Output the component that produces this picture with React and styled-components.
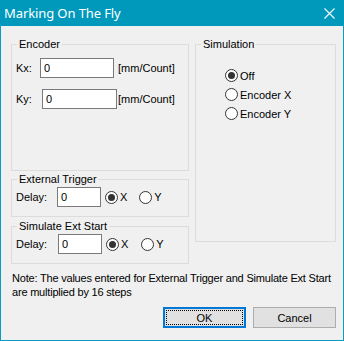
import React from 'react';
import styled, { createGlobalStyle } from 'styled-components';

const Global = createGlobalStyle`
  html, body { margin: 0; padding: 0; background: #f0f0f0; }
  body { font-family: "Liberation Sans", Arial, sans-serif; font-size: 11px; color: #000; }
`;

const Window = styled.div`
  width: 344px;
  height: 341px;
  box-sizing: border-box;
  border: 1px solid #0a9cc0;
  border-top: none;
  background: #f0f0f0;
  display: flex;
  flex-direction: column;
`;

const TitleBar = styled.div`
  height: 26px;
  background: #0099bc;
  color: #fff;
  display: flex;
  align-items: center;
  justify-content: space-between;
  padding: 0 9px 0 4px;
  margin: 0 -1px;
  font-family: "Noto Sans", "Open Sans", sans-serif;
  font-size: 13px;
`;

const Title = styled.span`
  letter-spacing: -0.1px;
`;

const Body = styled.div`
  flex: 1;
  padding: 12px 7px 0 10px;
  display: flex;
  flex-direction: column;
`;

const Columns = styled.div`
  display: grid;
  grid-template-columns: 178px 141px;
  column-gap: 6px;
  align-items: start;
`;

const Stack = styled.div`
  display: flex;
  flex-direction: column;
`;

const Group = styled.fieldset`
  margin: ${p => p.$mt || 0}px 0 0 0;
  padding: ${p => p.$pad};
  height: ${p => p.$h}px;
  box-sizing: border-box;
  border: 1px solid #dcdcdc;
  min-width: 0;
`;

const Caption = styled.legend`
  padding: 0 2px;
  margin: 0 0 0 1px;
  font-size: 11px;
  line-height: 13px;
`;

const FieldRow = styled.div`
  display: flex;
  align-items: center;
  height: 20px;
  margin-top: ${p => p.$mt || 0}px;
`;

const Label = styled.span`
  width: ${p => p.$w}px;
  flex: none;
`;

const Input = styled.div`
  width: ${p => p.$w}px;
  height: 20px;
  box-sizing: border-box;
  border: 1px solid #7a7a7a;
  background: #fff;
  padding: 0 0 0 3px;
  display: flex;
  align-items: center;
  flex: none;
`;

const Unit = styled.span`
  margin-left: ${p => p.$ml}px;
`;

const RadioItem = styled.label`
  display: flex;
  align-items: center;
  gap: 2px;
  margin-left: ${p => p.$ml || 0}px;
  height: ${p => p.$h || 20}px;
`;

const RadioDot = styled.span`
  width: 13px;
  height: 13px;
  box-sizing: border-box;
  border-radius: 50%;
  border: 1px solid #333;
  background: #fff;
  display: flex;
  align-items: center;
  justify-content: center;
  flex: none;
  &::after {
    content: '';
    width: 7px;
    height: 7px;
    border-radius: 50%;
    background: ${p => (p.$on ? '#333' : 'transparent')};
  }
`;

const RadioList = styled.div`
  display: flex;
  flex-direction: column;
  margin-left: 25px;
`;

const Note = styled.p`
  margin: 7px 0 0 1px;
  line-height: 14px;
  white-space: nowrap;
  letter-spacing: -0.2px;
`;

const Buttons = styled.div`
  display: flex;
  justify-content: flex-end;
  gap: 7px;
  margin-top: 8px;
`;

const Button = styled.div`
  width: 83px;
  height: 21px;
  box-sizing: border-box;
  background: #e1e1e1;
  border: ${p => (p.$primary ? '2px solid #0078d7' : '1px solid #adadad')};
  display: flex;
  align-items: center;
  justify-content: center;
  position: relative;
  ${p => p.$primary && `
    &::after {
      content: '';
      position: absolute;
      inset: 1px;
      border: 1px dotted #000;
    }
  `}
`;

function Radio({ on, label, ml, h }) {
  return (
    <RadioItem $ml={ml} $h={h}>
      <RadioDot $on={on} />
      <span>{label}</span>
    </RadioItem>
  );
}

export default function App() {
  return (
    <>
      <Global />
      <Window>
        <TitleBar>
          <Title>Marking On The Fly</Title>
          <svg width="11" height="11" viewBox="0 0 11 11">
            <path d="M0.5 0.5 L10.5 10.5 M10.5 0.5 L0.5 10.5" stroke="#fff" strokeWidth="1.1" />
          </svg>
        </TitleBar>
        <Body>
          <Columns>
            <Stack>
              <Group $h={133} $pad="7px 4px 0 4px">
                <Caption>Encoder</Caption>
                <FieldRow>
                  <Label $w={24}>Kx:</Label>
                  <Input $w={74}>0</Input>
                  <Unit $ml={4}>[mm/Count]</Unit>
                </FieldRow>
                <FieldRow $mt={11}>
                  <Label $w={26}>Ky:</Label>
                  <Input $w={75}>0</Input>
                  <Unit $ml={1}>[mm/Count]</Unit>
                </FieldRow>
              </Group>
              <Group $h={44} $mt={2} $pad="1px 4px 0 4px">
                <Caption>External Trigger</Caption>
                <FieldRow>
                  <Label $w={41}>Delay:</Label>
                  <Input $w={44}>0</Input>
                  <Radio on label="X" ml={4} />
                  <Radio label="Y" ml={12} />
                </FieldRow>
              </Group>
              <Group $h={44} $mt={3} $pad="1px 4px 0 4px">
                <Caption>Simulate Ext Start</Caption>
                <FieldRow>
                  <Label $w={42}>Delay:</Label>
                  <Input $w={44}>0</Input>
                  <Radio on label="X" ml={4} />
                  <Radio label="Y" ml={13} />
                </FieldRow>
              </Group>
            </Stack>
            <Stack>
              <Group $h={204} $pad="15px 4px 0 4px">
                <Caption>Simulation</Caption>
                <RadioList>
                  <Radio on label="Off" h={19} />
                  <Radio label="Encoder X" h={19} />
                  <Radio label="Encoder Y" h={19} />
                </RadioList>
              </Group>
            </Stack>
          </Columns>
          <Note>
            Note: The values entered for External Trigger and Simulate Ext Start
            <br />
            are multiplied by 16 steps
          </Note>
          <Buttons>
            <Button $primary>OK</Button>
            <Button>Cancel</Button>
          </Buttons>
        </Body>
      </Window>
    </>
  );
}
